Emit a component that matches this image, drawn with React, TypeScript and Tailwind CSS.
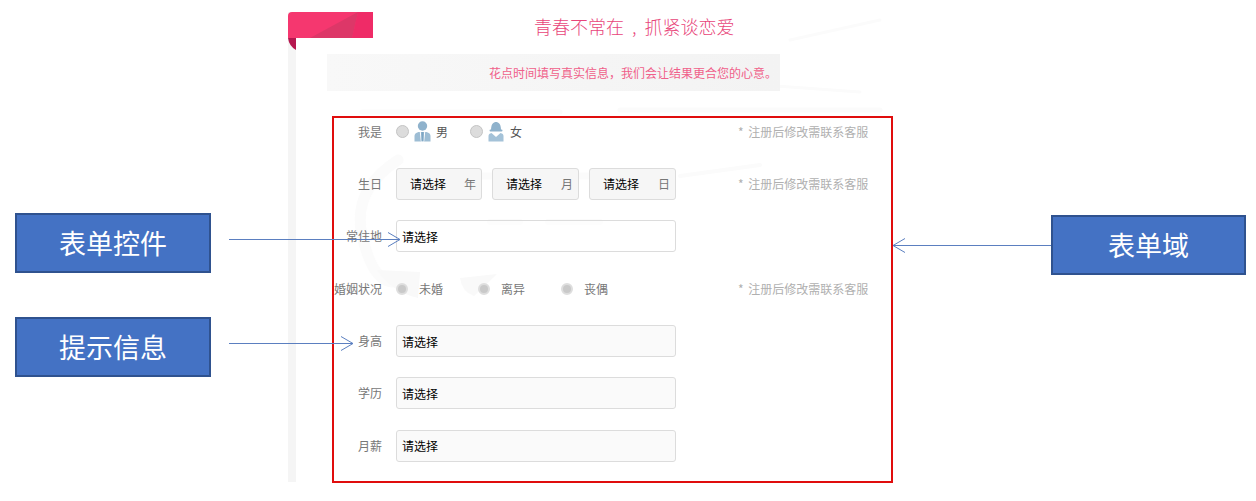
const font = "font-['Noto_Sans_CJK_SC','Liberation_Sans',sans-serif]";

// Person icons beside the gender radios
const MaleIcon = () => (
  <svg width="17" height="21" viewBox="0 0 17 21" className="block shrink-0">
    <circle cx="8.500" cy="5" r="4.700" fill="#8fb2cc" />
    <path d="M0.500 20.500V15q0-3 4-4h8q4 1 4 4v5.500z" fill="#9dbdd4" />
    <path d="M6.300 11l1 9.500M10.700 11l-1 9.500" stroke="#fff" strokeWidth="1" />
    <path d="M8.500 11v9" stroke="#7ea6c4" strokeWidth="2" />
  </svg>
);

const FemaleIcon = () => (
  <svg width="16" height="21" viewBox="0 0 16 21" className="block shrink-0">
    <path d="M3 9C3 3 5.500 1 8 1s5 2 5 8z" fill="#8fb2cc" />
    <rect x="1.500" y="8.500" width="13" height="2" rx="1" fill="#8fb2cc" />
    <path d="M0.500 20.500V15q0-2.500 3-3l4.500 4 4.500-4q3 .5 3 3v5.500z" fill="#a4c2d8" />
  </svg>
);

const Ribbon = () => (
  <svg width="85" height="38" viewBox="0 0 85 38" className="absolute -left-[8px] top-0">
    <path d="M0 4Q0 0 4 0H85V26H0z" fill="#f5376f" />
    <path d="M22 26L70 0L64 26z" fill="#dd3768" />
    <path d="M70 0H85V26H64z" fill="#ef2b67" />
    <path d="M0 26H8V38Q1 34 0 26z" fill="#b5174f" />
  </svg>
);

// Very faint brush lettering behind the form
const Watermark = () => (
  <svg width="1256" height="501" className="absolute left-0 top-0">
    <g fill="none" stroke="#fbfbfb" strokeLinecap="round">
      <path d="M398 160Q352 190 362 235T392 282" strokeWidth="11" />
      <path d="M440 176H640" strokeWidth="7" />
      <path d="M490 222H520M548 222H600" strokeWidth="6" />
      <path d="M680 176L760 165" strokeWidth="4" />
      <path d="M362 112H560M620 110H880" strokeWidth="5" />
      <path d="M720 82L860 92" strokeWidth="3" />
      <path d="M790 40L880 20" strokeWidth="3" />
    </g>
    <g fill="#f9f9f9">
      <path d="M377 270L420 272L418 298Q392 292 377 270z" />
      <path d="M460 278L497 274L474 296Q462 292 460 278z" />
    </g>
  </svg>
);

const Radio = ({ size = "md" }: { size?: "md" | "sm" }) => (
  <span
    className={
      size === "md"
        ? "block h-[13px] w-[13px] shrink-0 rounded-full border border-[#c4c4c4] bg-[#dcdcdc]"
        : "block h-[12px] w-[12px] shrink-0 rounded-full border-2 border-[#dedede] bg-[#c9c9c9]"
    }
  />
);

const Row = ({
  label,
  hint,
  children,
}: {
  label: string;
  hint?: boolean;
  children: React.ReactNode;
}) => (
  <div className="flex h-[52.4px] items-center">
    <div className="w-[48px] shrink-0 whitespace-nowrap text-right text-[12px] text-[#777]">{label}</div>
    <div className="ml-[14px] flex w-[342px] shrink-0 items-center">{children}</div>
    {hint && (
      <div className="whitespace-nowrap text-[12px] text-[#b0b0b0]">
        <span className="mr-[2px]">*</span> 注册后修改需联系客服
      </div>
    )}
  </div>
);

const SelectField = ({ plain }: { plain?: boolean }) => (
  <div
    className={`flex h-[32px] w-[280px] items-center rounded-[3px] border border-[#dcdcdc] pl-[5px] pt-[1px] text-[12px] text-black ${
      plain ? "bg-white/60" : "bg-[#fafafa]"
    }`}
  >
    请选择
  </div>
);

const DateField = ({ unit, width }: { unit: string; width: string }) => (
  <div
    className={`flex h-[32px] items-center justify-between rounded-[3px] border border-[#dcdcdc] bg-[#f6f6f6] pl-[13px] pr-[5px] text-[12px] text-black ${width}`}
  >
    <span>请选择</span>
    <span className="text-[#777]">{unit}</span>
  </div>
);

const Callout = ({ text, className }: { text: string; className: string }) => (
  <div
    className={`absolute flex h-[60px] items-center justify-center border-2 border-[#2f528f] bg-[#4472c4] text-[27px] text-white ${className}`}
  >
    {text}
  </div>
);

export default function App() {
  return (
    <div className={`relative h-[501px] w-[1256px] overflow-hidden bg-white ${font}`}>
      <Watermark />

      {/* Page sheet */}
      <div className="relative ml-[288px] w-[640px] pt-[12px]">
        <div className="relative h-[470px] border-l-[8px] border-[#f5f5f5]">
          <Ribbon />

          <div className="ml-[238px] flex h-[28px] w-[201px] items-center whitespace-nowrap text-[18px] font-light text-[#e8457a]">
            青春不常在<span className="mx-[8px]">,</span>抓紧谈恋爱
          </div>

          <div className="ml-[31px] mt-[14px] flex h-[37px] w-[453px] items-center justify-end bg-gradient-to-r from-[#f8f8f8] to-[#f3f3f3] pr-[3px] text-[12px] text-[#f0608a]">
            花点时间填写真实信息，我们会让结果更合您的心意。
          </div>

          {/* Form area */}
          <div className="ml-[36px] mt-[25px] h-[367px] w-[561px] border-2 border-[#e00d0d]">
            <div className="-mt-[12.7px]">
              <Row label="我是" hint>
                <Radio />
                <span className="ml-[5px]"><MaleIcon /></span>
                <span className="ml-[5px] text-[12px] text-[#555]">男</span>
                <span className="ml-[22px]"><Radio /></span>
                <span className="ml-[5px]"><FemaleIcon /></span>
                <span className="ml-[6px] text-[12px] text-[#555]">女</span>
              </Row>
              <Row label="生日" hint>
                <div className="flex gap-[10px]">
                  <DateField unit="年" width="w-[86px]" />
                  <DateField unit="月" width="w-[87px]" />
                  <DateField unit="日" width="w-[87px]" />
                </div>
              </Row>
              <Row label="常住地">
                <SelectField plain />
              </Row>
              <Row label="婚姻状况" hint>
                <Radio size="sm" />
                <span className="ml-[11px] text-[12px] text-[#777]">未婚</span>
                <span className="ml-[35px]"><Radio size="sm" /></span>
                <span className="ml-[11px] text-[12px] text-[#777]">离异</span>
                <span className="ml-[36px]"><Radio size="sm" /></span>
                <span className="ml-[11px] text-[12px] text-[#777]">丧偶</span>
              </Row>
              <Row label="身高">
                <SelectField />
              </Row>
              <Row label="学历">
                <SelectField />
              </Row>
              <Row label="月薪">
                <SelectField />
              </Row>
            </div>
          </div>
        </div>
      </div>

      {/* Annotations laid over the screenshot */}
      <Callout text="表单控件" className="left-[15px] top-[213px] w-[196px]" />
      <Callout text="提示信息" className="left-[15px] top-[317px] w-[196px]" />
      <Callout text="表单域" className="left-[1051px] top-[215px] w-[195px]" />

      <svg width="1256" height="501" className="pointer-events-none absolute left-0 top-0">
        <g fill="none" stroke="#5b7fc0" strokeWidth="1">
          <path d="M229 239.500H400M388 232.500l12 7-12 7" />
          <path d="M229 343.500H353M341 336.500l12 7-12 7" />
          <path d="M1051 245.500H893M905 238.500l-12 7 12 7" />
        </g>
      </svg>
    </div>
  );
}
